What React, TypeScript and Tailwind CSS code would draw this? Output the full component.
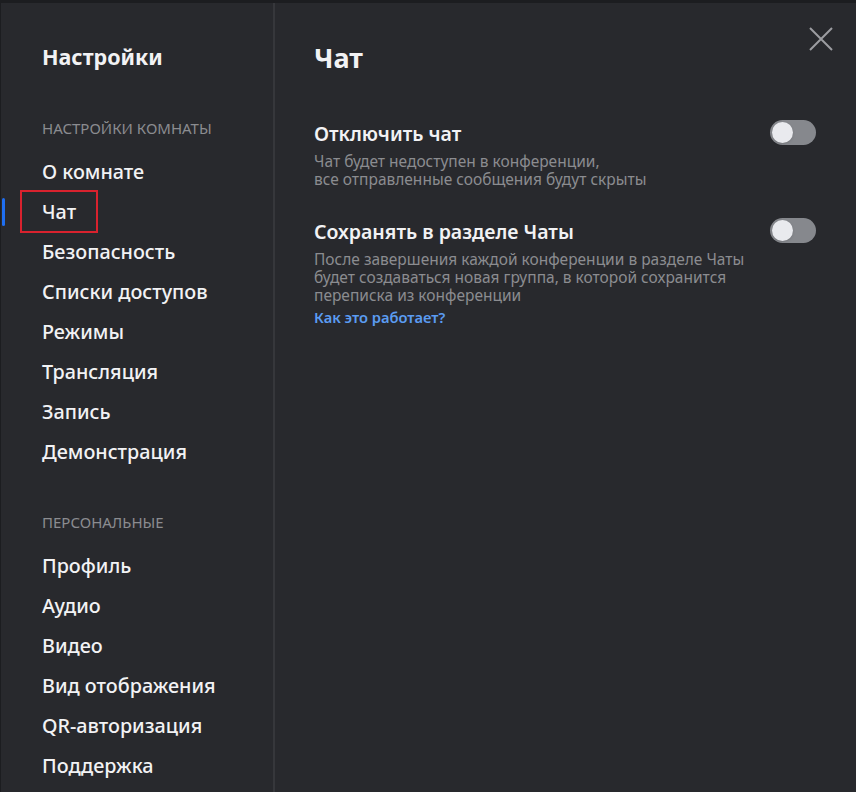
import { useState } from 'react'

interface NavSection {
  title: string
  items: string[]
}

const sections: NavSection[] = [
  {
    title: 'Настройки комнаты',
    items: ['О комнате', 'Чат', 'Безопасность', 'Списки доступов', 'Режимы', 'Трансляция', 'Запись', 'Демонстрация'],
  },
  {
    title: 'Персональные',
    items: ['Профиль', 'Аудио', 'Видео', 'Вид отображения', 'QR-авторизация', 'Поддержка'],
  },
]

function Toggle({ on, onChange }: { on: boolean; onChange: () => void }) {
  return (
    <button
      type="button"
      onClick={onChange}
      className={`relative shrink-0 w-[46px] h-[25px] rounded-full ${on ? 'bg-[#2f7ff0]' : 'bg-[#86888d]'}`}
      aria-pressed={on}
    >
      <span
        className={`absolute top-[2px] w-[21px] h-[21px] rounded-full bg-[#e9eaee] shadow ${on ? 'left-[23px]' : 'left-[2px]'}`}
      />
    </button>
  )
}

export default function App() {
  const [active, setActive] = useState('Чат')
  const [disableChat, setDisableChat] = useState(false)
  const [saveChat, setSaveChat] = useState(false)

  return (
    <div
      className="w-[856px] h-[792px] overflow-hidden flex bg-[#28292d] border-t-[3px] border-l border-[#1c1d20] text-[#f2f2f4]"
      style={{ fontFamily: '"Noto Sans", "Open Sans", sans-serif' }}
    >
      {/* Sidebar */}
      <aside className="w-[274px] shrink-0 border-r-2 border-[#36373b] pt-[39px]">
        <h1 className="pl-[41px] text-[21.5px] font-bold leading-[30px]">Настройки</h1>

        {sections.map((section, i) => (
          <div key={section.title} className={i === 0 ? 'mt-[46px]' : 'mt-[40px]'}>
            <div className="pl-[41px] text-[15px] uppercase text-[#8b8c90] leading-[20px] mb-[14px]">
              {section.title}
            </div>
            <ul>
              {section.items.map((item) => {
                const isActive = item === active
                return (
                  <li key={item} className="relative h-[40px] flex items-center">
                    {isActive && (
                      <>
                        <span className="absolute left-[1px] top-[6px] w-[3px] h-[28px] rounded-full bg-[#1f6ef0]" />
                        <span className="absolute left-[19px] top-[-2px] w-[78px] h-[43px] border-2 border-[#d9222e]" />
                      </>
                    )}
                    <button
                      type="button"
                      onClick={() => setActive(item)}
                      className="pl-[41px] text-[19.8px] font-medium leading-[26px] text-left"
                    >
                      {item}
                    </button>
                  </li>
                )
              })}
            </ul>
          </div>
        ))}
      </aside>

      {/* Content */}
      <main className="relative flex-1 min-w-0 pl-[39px] pr-[40px] pt-[38px]">
        <button type="button" className="absolute top-[23px] right-[22px] text-[#9c9da1]" aria-label="Закрыть">
          <svg width="26" height="26" viewBox="0 0 26 26" fill="none" stroke="currentColor" strokeWidth="2">
            <path d="M2 2L24 24M24 2L2 24" />
          </svg>
        </button>

        <h2 className="text-[27px] font-bold leading-[34px]">Чат</h2>

        <div className="mt-[46px] flex justify-between gap-4">
          <div className="min-w-0">
            <div className="text-[19.5px] font-semibold leading-[26px]">Отключить чат</div>
            <p className="mt-[5px] text-[15.5px] leading-[18px] text-[#8b8c90]">
              Чат будет недоступен в конференции,
              <br />
              все отправленные сообщения будут скрыты
            </p>
          </div>
          <div className="-mt-[1px]">
            <Toggle on={disableChat} onChange={() => setDisableChat(!disableChat)} />
          </div>
        </div>

        <div className="mt-[31px] flex justify-between gap-4">
          <div className="w-[440px] min-w-0">
            <div className="text-[19.5px] font-semibold leading-[26px]">Сохранять в разделе Чаты</div>
            <p className="mt-[5px] text-[15.5px] leading-[18px] text-[#8b8c90]">
              После завершения каждой конференции в разделе Чаты будет создаваться новая группа, в которой
              сохранится переписка из конференции
            </p>
            <a href="#" className="block mt-[3px] text-[14.7px] font-semibold leading-[20px] text-[#5b9cf2]">
              Как это работает?
            </a>
          </div>
          <div className="-mt-[1px]">
            <Toggle on={saveChat} onChange={() => setSaveChat(!saveChat)} />
          </div>
        </div>
      </main>
    </div>
  )
}
